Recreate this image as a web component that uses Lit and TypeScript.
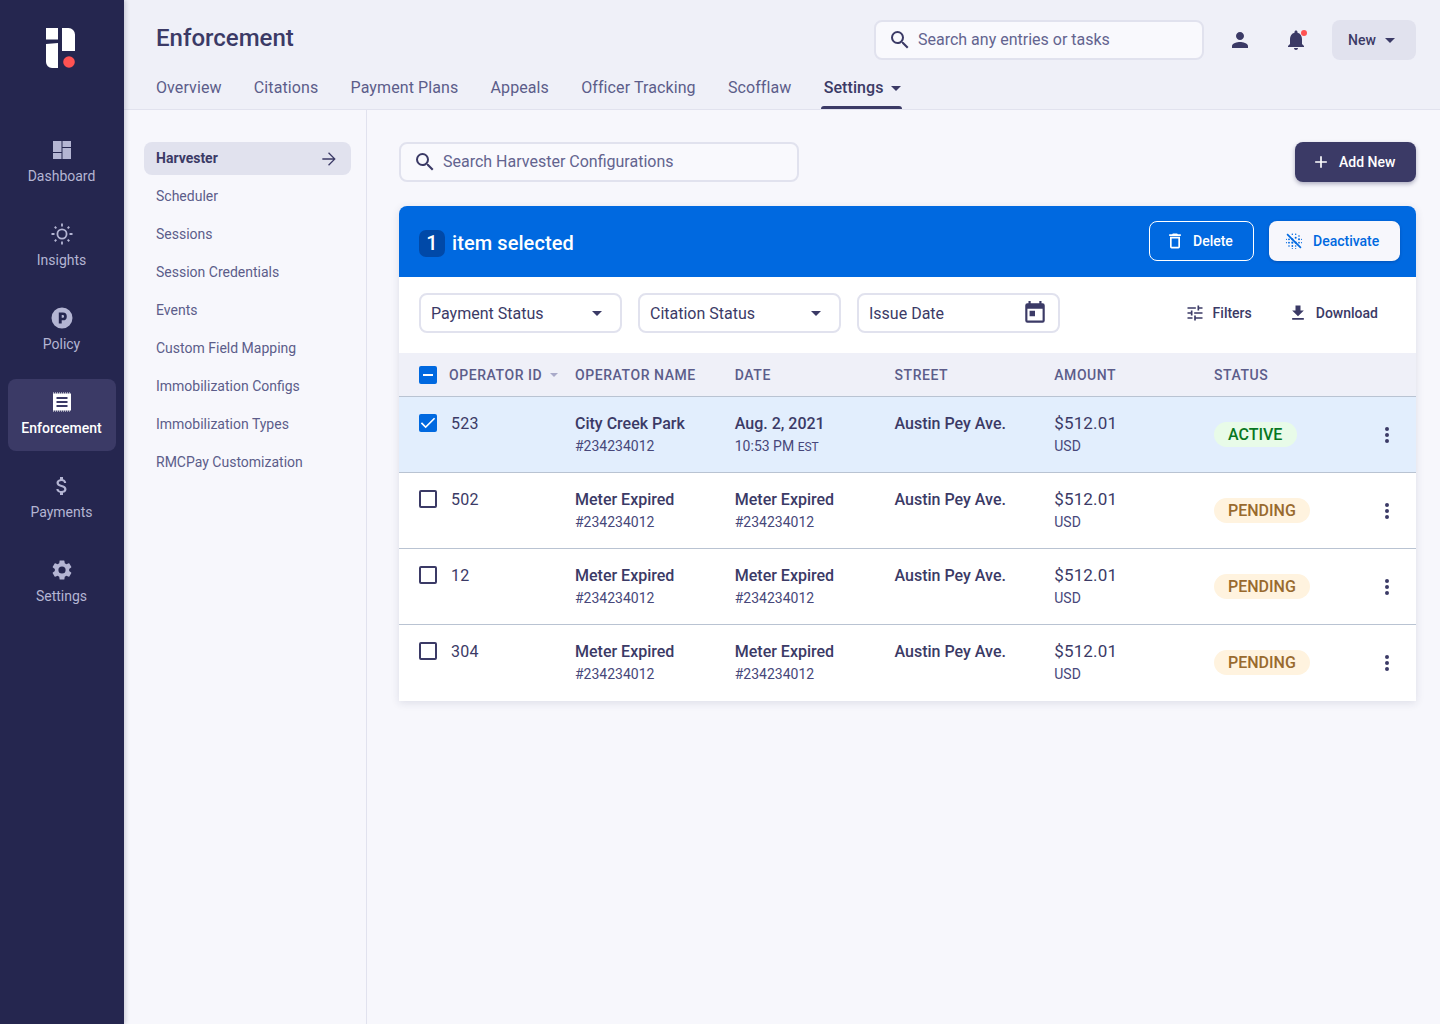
import { LitElement, html, css, svg } from "lit";
import { customElement } from "lit/decorators.js";

const ic = (d: unknown, size = 24, cls = "") =>
  html`<svg class=${cls} width=${size} height=${size} viewBox="0 0 24 24" fill="currentColor">${d}</svg>`;
const P = {
  search: svg`<path d="M15.5 14h-.79l-.28-.27A6.47 6.47 0 0 0 16 9.5 6.5 6.5 0 1 0 9.5 16c1.61 0 3.09-.59 4.23-1.57l.27.28v.79l5 4.99L20.49 19l-4.99-5zm-6 0C7.01 14 5 11.99 5 9.5S7.01 5 9.5 5 14 7.01 14 9.5 11.99 14 9.5 14z"/>`,
  person: svg`<path d="M12 12c2.21 0 4-1.79 4-4s-1.79-4-4-4-4 1.79-4 4 1.79 4 4 4zm0 2c-2.67 0-8 1.34-8 4v2h16v-2c0-2.66-5.33-4-8-4z"/>`,
  bell: svg`<path d="M12 22c1.1 0 2-.9 2-2h-4c0 1.1.9 2 2 2zm6-6v-5c0-3.07-1.63-5.64-4.5-6.32V4c0-.83-.67-1.5-1.5-1.5s-1.5.67-1.5 1.5v.68C7.64 5.36 6 7.92 6 11v5l-2 2v1h16v-1l-2-2z"/>`,
  dash: svg`<path d="M3 3h8.5v11H3zM3 15h8.5v6H3zM12.5 3H21v6h-8.5zM12.5 10H21v11h-8.5z"/>`,
  sun: svg`<path fill-rule="evenodd" d="M12 6.5a5.5 5.5 0 1 0 0 11 5.5 5.5 0 0 0 0-11zm0 1.8a3.7 3.7 0 1 1 0 7.4 3.7 3.7 0 0 1 0-7.4z"/><path d="M11.1 1.5h1.8v3h-1.8zM11.1 19.5h1.8v3h-1.8zM1.5 11.1h3v1.8h-3zM19.5 11.1h3v1.8h-3zM4.1 5.4l1.3-1.3 1.6 1.6-1.3 1.3zM17 18.3l1.3-1.3 1.6 1.6-1.3 1.3zM4.1 18.6l1.6-1.6 1.3 1.3-1.6 1.6zM17 5.7l1.6-1.6 1.3 1.3-1.6 1.6z"/>`,
  policy: svg`<path fill-rule="evenodd" d="M12 1.5a10.5 10.5 0 1 0 0 21 10.5 10.5 0 0 0 0-21zM8.8 6.5h4.1a3.9 3.9 0 0 1 0 7.8h-1.2v3.2H8.8zm2.9 2.6v2.6h1.1a1.3 1.3 0 0 0 0-2.6z"/>`,
  receipt: svg`<path fill-rule="evenodd" d="M3 3.4h18v17.2H3zM6.5 7v2h11V7zm0 4v2h11v-2zm0 4v2h11v-2z"/><path d="M3 2.4h1v1H3zM5 2.4h1v1H5zM7 2.4h1v1H7zM9 2.4h1v1H9zM11 2.4h1v1h-1zM13 2.4h1v1h-1zM15 2.4h1v1h-1zM17 2.4h1v1h-1zM19 2.4h1v1h-1zM3 20.6h1v1H3zM5 20.6h1v1H5zM7 20.6h1v1H7zM9 20.6h1v1H9zM11 20.6h1v1h-1zM13 20.6h1v1h-1zM15 20.6h1v1h-1zM17 20.6h1v1h-1zM19 20.6h1v1h-1z"/>`,
  dollar: svg`<path d="M11.8 10.9c-2.27-.59-3-1.2-3-2.15 0-1.09 1.01-1.85 2.7-1.85 1.78 0 2.44.85 2.5 2.1h2.21c-.07-1.72-1.12-3.3-3.21-3.81V3h-3v2.16c-1.94.42-3.5 1.68-3.5 3.61 0 2.31 1.91 3.46 4.7 4.13 2.5.6 3 1.48 3 2.41 0 .69-.49 1.79-2.7 1.79-2.06 0-2.87-.92-2.98-2.1h-2.2c.12 2.19 1.76 3.42 3.68 3.83V21h3v-2.15c1.95-.37 3.5-1.5 3.5-3.55 0-2.84-2.43-3.81-4.7-4.4z"/>`,
  gear: svg`<path d="M19.14 12.94c.04-.3.06-.61.06-.94 0-.32-.02-.64-.07-.94l2.03-1.58a.49.49 0 0 0 .12-.61l-1.92-3.32a.49.49 0 0 0-.59-.22l-2.39.96c-.5-.38-1.03-.7-1.62-.94l-.36-2.54a.48.48 0 0 0-.48-.41h-3.84c-.24 0-.43.17-.47.41l-.36 2.54c-.59.24-1.13.57-1.62.94l-2.39-.96a.49.49 0 0 0-.59.22L2.74 8.87c-.12.21-.08.47.12.61l2.03 1.58c-.05.3-.09.63-.09.94s.02.64.07.94l-2.03 1.58a.49.49 0 0 0-.12.61l1.92 3.32c.12.22.37.29.59.22l2.39-.96c.5.38 1.03.7 1.62.94l.36 2.54c.05.24.24.41.48.41h3.84c.24 0 .44-.17.47-.41l.36-2.54c.59-.24 1.13-.56 1.62-.94l2.39.96c.22.08.47 0 .59-.22l1.92-3.32c.12-.22.07-.47-.12-.61l-2.01-1.58zM12 15.6A3.6 3.6 0 1 1 12 8.4a3.6 3.6 0 0 1 0 7.2z"/>`,
  arrow: svg`<path d="M12 4l-1.1 1.1L17 11.2H4v1.6h13l-6.1 6.1L12 20l8-8z"/>`,
  plus: svg`<path d="M19 13h-6v6h-2v-6H5v-2h6V5h2v6h6v2z"/>`,
  trash: svg`<path fill-rule="evenodd" d="M6 19a2 2 0 0 0 2 2h8a2 2 0 0 0 2-2V7H6zm2-10h8v10H8zM15.5 4l-1-1h-5l-1 1H5v2h14V4z"/>`,
  deact: svg`<path d="M3 4.4 4.4 3 21 19.6 19.6 21z"/><g><circle cx="10" cy="4" r=".9"/><circle cx="14" cy="4" r=".9"/><circle cx="18" cy="6" r="1"/><circle cx="14" cy="8" r="1.2"/><circle cx="18" cy="10" r="1.2"/><circle cx="21" cy="10" r=".7"/><circle cx="21" cy="14" r=".7"/><circle cx="18" cy="14" r="1"/><circle cx="3" cy="10" r=".7"/><circle cx="6" cy="10" r="1.1"/><circle cx="10" cy="10" r="1.3"/><circle cx="3" cy="14" r=".7"/><circle cx="6" cy="14" r="1.1"/><circle cx="10" cy="14" r="1.3"/><circle cx="14" cy="14" r="1.3"/><circle cx="6" cy="18" r="1"/><circle cx="10" cy="18" r="1.1"/><circle cx="14" cy="18" r="1"/><circle cx="10" cy="21" r=".7"/><circle cx="14" cy="21" r=".7"/></g>`,
  tune: svg`<path d="M3 17v2h6v-2H3zM3 5v2h10V5H3zm10 16v-2h8v-2h-8v-2h-2v6h2zM7 9v2H3v2h4v2h2V9H7zm14 4v-2H11v2h10zm-6-4h2V7h4V5h-4V3h-2v6z"/>`,
  dl: svg`<path d="M19 9h-4V3H9v6H5l7 7 7-7zM5 18v2h14v-2H5z"/>`,
  cal: svg`<path fill-rule="evenodd" d="M19 3h-1V1h-2v2H8V1H6v2H5a2 2 0 0 0-2 2v14a2 2 0 0 0 2 2h14a2 2 0 0 0 2-2V5a2 2 0 0 0-2-2zm0 16H5V8h14zM7 10h5v5H7z"/>`,
  dots: svg`<path d="M12 8a2 2 0 1 0 0-4 2 2 0 0 0 0 4zm0 2a2 2 0 1 0 0 4 2 2 0 0 0 0-4zm0 6a2 2 0 1 0 0 4 2 2 0 0 0 0-4z"/>`,
  check: svg`<path d="M9.2 16.6 4.8 12.2l-1.4 1.4 5.8 5.8L20.6 8 19.2 6.6z" transform="translate(0 -1)"/>`,
};

const NAV = [
  ["Dashboard", P.dash],
  ["Insights", P.sun],
  ["Policy", P.policy],
  ["Enforcement", P.receipt],
  ["Payments", P.dollar],
  ["Settings", P.gear],
] as const;
const TABS = ["Overview", "Citations", "Payment Plans", "Appeals", "Officer Tracking", "Scofflaw"];
const SUB = ["Scheduler", "Sessions", "Session Credentials", "Events", "Custom Field Mapping", "Immobilization Configs", "Immobilization Types", "RMCPay Customization"];
const ROWS = [
  { id: "523", name: "City Creek Park", d1: "Aug. 2, 2021", d2: "10:53 PM", tz: "EST", st: "ACTIVE", sel: true },
  { id: "502", name: "Meter Expired", d1: "Meter Expired", d2: "#234234012", tz: "", st: "PENDING", sel: false },
  { id: "12", name: "Meter Expired", d1: "Meter Expired", d2: "#234234012", tz: "", st: "PENDING", sel: false },
  { id: "304", name: "Meter Expired", d1: "Meter Expired", d2: "#234234012", tz: "", st: "PENDING", sel: false },
];

@customElement("app-root")
export class AppRoot extends LitElement {
  static styles = css`
    :host { display: block; width: 1440px; height: 1024px; overflow: hidden; font-family: Roboto, sans-serif; color: #3b3a66; background: #f7f7fc; }
    svg { display: block; flex: none; }
    .app { display: flex; height: 1024px; }
    .side { width: 124px; flex: none; background: #25264f; box-shadow: 2px 0 4px rgba(37,38,79,.18); position: relative; z-index: 2; display: flex; flex-direction: column; align-items: center; }
    .logo { margin-top: 28px; height: 40px; align-self: flex-start; margin-left: 46px; }
    .nav { margin-top: 59px; display: flex; flex-direction: column; gap: 12px; }
    .nav-item { width: 108px; height: 72px; border-radius: 8px; display: flex; flex-direction: column; align-items: center; padding: 11px 1px 0 0; box-sizing: border-box; color: #b4b5d3; font-size: 14px; line-height: 20px; }
    .nav-item svg { margin-bottom: 4px; }
    .nav-item.on { background: #3b3a66; color: #fff; font-weight: 500; }
    .main { flex: 1; min-width: 0; display: flex; flex-direction: column; }
    .head { height: 110px; box-sizing: border-box; background: #eff0f8; border-bottom: 1px solid #e1e2ee; padding: 20px 24px 0 32px; }
    .top { display: flex; align-items: center; height: 40px; }
    h1 { margin: 0; flex: 1; font-size: 24px; line-height: 36px; font-weight: 500; color: #3b3a66; position: relative; top: -2px; }
    .search { display: flex; align-items: center; box-sizing: border-box; height: 40px; background: #f9f9fd; border: 2px solid #e1e2ee; border-radius: 8px; font-size: 16px; color: #63648f; }
    .search svg { color: #3b3a66; margin-left: 12px; margin-right: 6px; }
    .search span { position: relative; top: -1px; }
    .search.g { width: 330px; }
    .icon-btn { width: 24px; height: 24px; color: #3b3a66; position: relative; }
    .icon-btn.a { margin-left: 24px; }
    .icon-btn.b { margin-left: 32px; }
    .reddot { position: absolute; right: 1px; top: 2px; width: 6px; height: 6px; border-radius: 50%; background: #ff5252; }
    .newb { margin-left: 24px; width: 84px; height: 40px; border-radius: 8px; background: #e1e2ee; display: flex; align-items: center; padding-left: 16px; box-sizing: border-box; font-size: 14px; font-weight: 500; color: #3b3a66; }
    .caret { width: 0; height: 0; border-left: 5px solid transparent; border-right: 5px solid transparent; border-top: 5px solid currentColor; flex: none; }
    .newb .caret { margin-left: 9px; }
    .tabs { display: flex; gap: 32.2px; margin-top: 8px; height: 41px; }
    .tab { font-size: 16px; line-height: 24px; padding-top: 8px; color: #5c5d8a; position: relative; letter-spacing: .1px; white-space: nowrap; }
    .tab.on { font-weight: 500; color: #3b3a66; display: flex; align-items: flex-start; }
    .tab.on .caret { margin: 10px 0 0 7px; }
    .tab.on::after { content: ""; position: absolute; left: -3px; right: -1px; bottom: 0; height: 3px; background: #3b3a66; border-radius: 4px 4px 0 0; }
    .body { flex: 1; display: flex; min-height: 0; }
    .sub { width: 243px; flex: none; box-sizing: border-box; border-right: 1px solid #e1e2ee; padding: 32px 15px 0 20px; }
    .sub-on { height: 33px; border-radius: 8px; background: #e1e2ee; display: flex; align-items: center; justify-content: space-between; padding: 0 12px; font-size: 14px; font-weight: 700; color: #3b3a66; margin-bottom: 2px; }
    .sub-on span { position: relative; top: -1px; }
    .sub-i { height: 38px; display: flex; align-items: center; padding-left: 12px; font-size: 14px; color: #5c5d8a; }
    .content { flex: 1; min-width: 0; padding: 32px 24px 0 32px; }
    .ctop { display: flex; justify-content: space-between; margin-bottom: 24px; }
    .search.c { width: 400px; background: #f9f9fd; }
    .add { width: 121px; height: 40px; box-sizing: border-box; border-radius: 8px; background: #3b3a66; color: #fff; font-size: 14px; font-weight: 500; display: flex; align-items: center; padding-left: 16px; gap: 8px; box-shadow: 0 2px 4px rgba(37,38,79,.35); }
    .card { background: #fff; border-radius: 8px 8px 0 0; box-shadow: 0 2px 8px rgba(37,38,79,.12); }
    .bar { height: 71px; background: #0069e0; border-radius: 8px 8px 0 0; color: #fff; display: flex; align-items: center; padding: 0 16px 0 20px; font-size: 20px; font-weight: 500; letter-spacing: .08px; }
    .count { width: 26px; height: 27px; border-radius: 7px; background: #0049a8; display: flex; align-items: center; justify-content: center; margin: 3px 7px 0 0; }
    .bar-label { margin-top: 3px; }
    .grow { flex: 1; }
    .act { height: 40px; box-sizing: border-box; border-radius: 8px; display: flex; align-items: center; font-size: 14px; font-weight: 500; margin-top: -1px; letter-spacing: 0; }
    .del { width: 105px; border: 1px solid #fff; padding-left: 15px; gap: 8px; margin-right: 15px; }
    .dea { width: 131px; background: #f7f7fc; color: #0069e0; padding-left: 15px; gap: 9px; box-shadow: 0 1px 3px rgba(0,30,90,.3); }
    .filters { height: 76px; box-sizing: border-box; display: flex; align-items: center; padding: 0 0 4px 20px; gap: 16px; }
    .sel { width: 203px; height: 40px; box-sizing: border-box; border: 2px solid #e1e2ee; border-radius: 8px; display: flex; align-items: center; justify-content: space-between; padding: 0 18px 0 10px; font-size: 16px; color: #3b3a66; }
    .sel.date { padding-right: 10px; }
    .tool { display: flex; align-items: center; font-size: 14px; font-weight: 500; color: #3b3a66; gap: 8px; }
    .tool.f { margin-left: auto; margin-right: 20px; }
    .tool.d { margin-right: 38px; }
    .row { display: grid; grid-template-columns: 176px 159.75px 159.75px 159.75px 159.75px 1fr; box-sizing: border-box; }
    .thead { height: 44px; background: #eff0f8; border-bottom: 1px solid #b9c3d2; align-items: center; font-size: 14px; font-weight: 500; color: #5c5d8a; letter-spacing: .56px; }
    .idc { display: flex; align-items: center; padding-left: 20px; }
    .idc .lab { margin-left: 12px; white-space: nowrap; }
    .thead .caret { margin-left: 8px; border-left-width: 4px; border-right-width: 4px; border-top-width: 4px; color: #a9aac9; }
    .cb { width: 18px; height: 18px; box-sizing: border-box; border-radius: 2px; flex: none; display: flex; align-items: center; justify-content: center; color: #fff; }
    .cb.off { border: 2px solid #3b3a66; }
    .cb.on { background: #0069e0; }
    .minus { width: 10px; height: 2px; background: #fff; }
    .tr { height: 76px; border-bottom: 1px solid #b9c3d2; padding-top: 16px; font-size: 16px; color: #3b3a66; }
    .tr:last-child { border-bottom: 0; }
    .tr.sel-row { background: #e2eefd; }
    .tr .idc { align-items: flex-start; padding-top: 1px; }
    .tr .idc .lab { margin-left: 14px; line-height: 18px; margin-top: 1px; letter-spacing: .2px; }
    .l1 { line-height: 22px; font-weight: 500; font-size: 16px; white-space: nowrap; }
    .l1.r { font-weight: 400; font-size: 17px; line-height: 20px; margin-bottom: 3px; letter-spacing: .15px; }
    .l2 { font-size: 14px; line-height: 20px; margin-top: 1px; color: #47477a; }
    .tz { font-size: 12px; }
    .stc { display: flex; align-items: flex-start; justify-content: space-between; padding: 9px 17px 0 0; }
    .pill { height: 25px; border-radius: 13px; padding: 0 14px; display: flex; align-items: center; font-size: 16px; font-weight: 500; }
    .pill.a { background: #e8fbe8; color: #07771f; padding-right: 15px; }
    .pill.p { background: #fff3df; color: #996a2e; }
    .dots { margin-top: 1px; color: #3b3a66; }
  `;

  render() {
    return html`<div class="app">
      <aside class="side">
        <svg class="logo" width="29" height="40" viewBox="0 0 29 40">
          <path d="M0 0h12v11.5H0zM0 16l12-1v25H6a6 6 0 0 1-6-6z" fill="#fff"/>
          <path d="M16 0h6.5A6.5 6.5 0 0 1 29 6.5V23H16z" fill="#fff"/>
          <circle cx="23" cy="34" r="5.8" fill="#ff5252"/>
        </svg>
        <div class="nav">
          ${NAV.map(([n, p]) => html`<div class="nav-item ${n === "Enforcement" ? "on" : ""}">${ic(p)}<span>${n}</span></div>`)}
        </div>
      </aside>
      <div class="main">
        <header class="head">
          <div class="top">
            <h1>Enforcement</h1>
            <div class="search g">${ic(P.search)}<span>Search any entries or tasks</span></div>
            <div class="icon-btn a">${ic(P.person)}</div>
            <div class="icon-btn b">${ic(P.bell)}<span class="reddot"></span></div>
            <div class="newb">New<span class="caret"></span></div>
          </div>
          <nav class="tabs">
            ${TABS.map((t) => html`<div class="tab">${t}</div>`)}
            <div class="tab on">Settings<span class="caret"></span></div>
          </nav>
        </header>
        <div class="body">
          <div class="sub">
            <div class="sub-on"><span>Harvester</span>${ic(P.arrow, 20)}</div>
            ${SUB.map((s) => html`<div class="sub-i">${s}</div>`)}
          </div>
          <div class="content">
            <div class="ctop">
              <div class="search c">${ic(P.search)}<span>Search Harvester Configurations</span></div>
              <div class="add">${ic(P.plus, 20)}<span>Add New</span></div>
            </div>
            <div class="card">
              <div class="bar">
                <span class="count">1</span><span class="bar-label">item selected</span><span class="grow"></span>
                <div class="act del">${ic(P.trash, 20)}<span>Delete</span></div>
                <div class="act dea">${ic(P.deact, 20)}<span>Deactivate</span></div>
              </div>
              <div class="filters">
                <div class="sel">Payment Status<span class="caret"></span></div>
                <div class="sel">Citation Status<span class="caret"></span></div>
                <div class="sel date">Issue Date${ic(P.cal, 26)}</div>
                <div class="tool f">${ic(P.tune, 20)}<span>Filters</span></div>
                <div class="tool d">${ic(P.dl, 20)}<span>Download</span></div>
              </div>
              <div class="row thead">
                <div class="idc"><span class="cb on"><span class="minus"></span></span><span class="lab">OPERATOR ID</span><span class="caret"></span></div>
                <div>OPERATOR NAME</div><div>DATE</div><div>STREET</div><div>AMOUNT</div><div>STATUS</div>
              </div>
              ${ROWS.map((r) => html`<div class="row tr ${r.sel ? "sel-row" : ""}">
                <div class="idc">
                  <span class="cb ${r.sel ? "on" : "off"}">${r.sel ? ic(P.check, 20) : ""}</span>
                  <span class="lab">${r.id}</span>
                </div>
                <div><div class="l1">${r.name}</div><div class="l2">#234234012</div></div>
                <div><div class="l1">${r.d1}</div><div class="l2">${r.d2}${r.tz ? html` <span class="tz">${r.tz}</span>` : ""}</div></div>
                <div><div class="l1">Austin Pey Ave.</div></div>
                <div><div class="l1 r">$512.01</div><div class="l2">USD</div></div>
                <div class="stc">
                  <span class="pill ${r.st === "ACTIVE" ? "a" : "p"}">${r.st}</span>
                  <span class="dots">${ic(P.dots, 24)}</span>
                </div>
              </div>`)}
            </div>
          </div>
        </div>
      </div>
    </div>`;
  }
}
